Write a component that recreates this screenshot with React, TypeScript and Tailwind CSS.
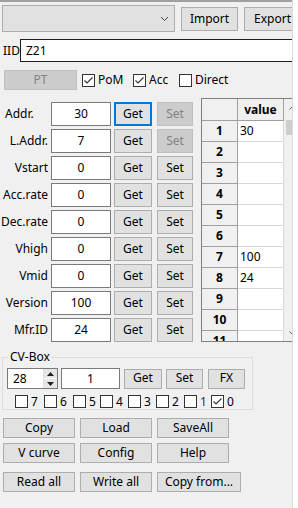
import React from 'react';

const ui = "font-['Noto_Sans','Liberation_Sans',sans-serif] text-[12px] leading-none";

const Btn = ({ label, w, h = 'h-[24px]', disabled = false, focused = false, extra = '' }: {
  label: string; w: string; h?: string; disabled?: boolean; focused?: boolean; extra?: string;
}) => {
  const look = disabled
    ? 'bg-[#cccccc] border border-[#bfbfbf] text-[#838383]'
    : focused
      ? 'bg-[#e1e1e1] border-2 border-[#0078d7] text-black'
      : 'bg-[#e1e1e1] border border-[#adadad] text-black';
  return (
    <div className={`${w} ${h} ${look} ${extra} shrink-0 flex items-center justify-center`}>
      <span className="-mt-[1px]">{label}</span>
    </div>
  );
};

const Check = ({ checked = false }: { checked?: boolean }) => (
  <div className="w-[13px] h-[13px] shrink-0 border border-[#333333] bg-white flex items-center justify-center">
    {checked && (
      <svg width="11" height="11" viewBox="0 0 11 11">
        <polyline points="1.5,5.5 4,8 9.5,2.5" fill="none" stroke="#333" strokeWidth="1.1" />
      </svg>
    )}
  </div>
);

const rows = [
  { label: 'Addr.', value: '30', left: true },
  { label: 'L.Addr.', value: '7' },
  { label: 'Vstart', value: '0' },
  { label: 'Acc.rate', value: '0' },
  { label: 'Dec.rate', value: '0' },
  { label: 'Vhigh', value: '0' },
  { label: 'Vmid', value: '0' },
  { label: 'Version', value: '100' },
  { label: 'Mfr.ID', value: '24' },
];

const gridValues: Record<number, string> = { 1: '30', 7: '100', 8: '24' };

const bits = [
  { n: '7', w: 'w-[29px]' },
  { n: '6', w: 'w-[29px]' },
  { n: '5', w: 'w-[27px]' },
  { n: '4', w: 'w-[28px]' },
  { n: '3', w: 'w-[28px]' },
  { n: '2', w: 'w-[28px]' },
  { n: '1', w: 'w-[27px]', purple: true },
  { n: '0', w: 'w-[20px]', checked: true },
];

export default function App() {
  return (
    <div className={`w-[298px] h-[508px] bg-white flex overflow-hidden ${ui}`}>
      <div className="w-[292px] h-full shrink-0 bg-[#f0f0f0] border-t-2 border-[#a0a0a0] overflow-hidden flex flex-col">
        {/* combo + import/export */}
        <div className="flex items-start mt-[3px] pl-[2px]">
          <div className="w-[173px] h-[27px] shrink-0 bg-[#e1e1e1] border border-[#adadad] flex items-center justify-end pr-[5px]">
            <svg width="9" height="6" viewBox="0 0 9 6">
              <polyline points="1,1 4.5,4.5 8,1" fill="none" stroke="#444" strokeWidth="1" />
            </svg>
          </div>
          <Btn label="Import" w="w-[57px]" extra="ml-[6px] mt-[2px]" />
          <Btn label="Export" w="w-[57px]" extra="ml-[6px] mt-[2px]" />
        </div>

        {/* IID */}
        <div className="flex items-center mt-[7px] pl-[3px]">
          <span className="w-[17px] shrink-0">IID</span>
          <div className="w-[290px] h-[23px] shrink-0 bg-white border border-[#1e1e1e] flex items-center pl-[5px]">
            Z21
          </div>
        </div>

        {/* PT + options */}
        <div className="flex items-center mt-[8px] pl-[4px]">
          <Btn label="PT" w="w-[73px]" h="h-[20px]" disabled />
          <div className="w-[51px] ml-[5px] flex items-center gap-[3px]">
            <Check checked /> <span>PoM</span>
          </div>
          <div className="w-[46px] flex items-center gap-[3px]">
            <Check checked /> <span>Acc</span>
          </div>
          <div className="flex items-center gap-[3px]">
            <Check /> <span>Direct</span>
          </div>
        </div>

        {/* parameters + grid */}
        <div className="flex items-start mt-[8px]">
          <div className="w-[193px] shrink-0 pt-[4px] flex flex-col gap-[3px]">
            {rows.map((r, i) => (
              <div key={r.label} className="flex items-center h-[24px]">
                <span className={`w-[48px] shrink-0 ${r.left ? 'text-left pl-[5px]' : 'text-right'}`}>{r.label}</span>
                <div className="w-[60px] h-[24px] ml-[3px] shrink-0 bg-white border border-[#7a7a7a] flex items-center justify-center">
                  {r.value}
                </div>
                <Btn label="Get" w="w-[38px]" extra="ml-[3px]" focused={i === 0} />
                <Btn label="Set" w="w-[36px]" extra="ml-[5px]" disabled={i < 2} />
              </div>
            ))}
          </div>

          <div className="ml-[8px] w-[101px] shrink-0 h-[244px] border border-[#808080] bg-white flex overflow-hidden">
            <div className="w-[82px] shrink-0 flex flex-col">
              <div className="flex h-[22px] shrink-0">
                <div className="w-[36px] bg-[#f0f0f0] border-r border-b border-[#a0a0a0]" />
                <div className="w-[46px] bg-[#f0f0f0] border-r border-b border-[#a0a0a0] flex items-center justify-center font-bold">
                  value
                </div>
              </div>
              {Array.from({ length: 11 }, (_, k) => k + 1).map((n) => (
                <div key={n} className="flex h-[21px] shrink-0">
                  <div className="w-[36px] bg-[#f0f0f0] border-r border-b border-[#a0a0a0] flex items-center justify-center font-bold">
                    {n}
                  </div>
                  <div className="w-[46px] bg-white border-r border-b border-[#d8d8d8] flex items-center pl-[2px]">
                    {gridValues[n] ?? ''}
                  </div>
                </div>
              ))}
            </div>
            <div className="w-[17px] shrink-0 bg-[#f0f0f0] flex flex-col items-center">
              <div className="h-[17px] flex items-center justify-center">
                <svg width="7" height="4" viewBox="0 0 7 4">
                  <polyline points="0.5,3.5 3.5,0.5 6.5,3.5" fill="none" stroke="#606060" strokeWidth="1" />
                </svg>
              </div>
              <div className="mt-[4px] w-[13px] h-[15px] bg-[#cdcdcd]" />
              <div className="mt-auto h-[17px] flex items-center justify-center">
                <svg width="7" height="4" viewBox="0 0 7 4">
                  <polyline points="0.5,0.5 3.5,3.5 6.5,0.5" fill="none" stroke="#606060" strokeWidth="1" />
                </svg>
              </div>
            </div>
          </div>
        </div>

        {/* CV-Box */}
        <fieldset className="mt-[8px] ml-[2px] w-[251px] border border-[#dcdcdc] pb-[1px]">
          <legend className="ml-[5px] px-[2px] leading-[14px]">CV-Box</legend>
          <div className="flex items-center mt-[4px] ml-[4px]">
            <div className="w-[51px] h-[21px] shrink-0 bg-white border border-[#7a7a7a] flex items-center">
              <span className="pl-[5px] flex-1">28</span>
              <div className="w-[14px] h-full flex flex-col border-l border-[#e0e0e0]">
                <div className="flex-1 bg-[#e6e6e6] border-b border-white flex items-center justify-center">
                  <svg width="7" height="4" viewBox="0 0 7 4"><polygon points="0,4 3.5,0 7,4" fill="#222" /></svg>
                </div>
                <div className="flex-1 bg-[#e6e6e6] flex items-center justify-center">
                  <svg width="7" height="4" viewBox="0 0 7 4"><polygon points="0,0 3.5,4 7,0" fill="#222" /></svg>
                </div>
              </div>
            </div>
            <div className="w-[59px] h-[21px] ml-[3px] shrink-0 bg-white border border-[#7a7a7a] flex items-center justify-center">
              1
            </div>
            <Btn label="Get" w="w-[38px]" h="h-[20px]" extra="ml-[4px]" />
            <Btn label="Set" w="w-[37px]" h="h-[20px]" extra="ml-[4px]" />
            <Btn label="FX" w="w-[37px]" h="h-[20px]" extra="ml-[5px]" />
          </div>
          <div className="flex items-center mt-[6px] ml-[12px]">
            {bits.map((b) => (
              <div key={b.n} className={`${b.w} shrink-0 flex items-center gap-[3px]`}>
                <Check checked={b.checked} />
                <span className={b.purple ? 'text-[#4c1a5c]' : ''}>{b.n}</span>
              </div>
            ))}
          </div>
        </fieldset>

        {/* bottom buttons */}
        <div className="flex flex-col mt-[8px] pl-[3px]">
          <div className="flex gap-[5px]">
            <Btn label="Copy" w="w-[72px]" h="h-[20px]" />
            <Btn label="Load" w="w-[72px]" h="h-[20px]" />
            <Btn label="SaveAll" w="w-[72px]" h="h-[20px]" />
          </div>
          <div className="flex gap-[5px] mt-[5px]">
            <Btn label="V curve" w="w-[72px]" h="h-[20px]" />
            <Btn label="Config" w="w-[72px]" h="h-[20px]" />
            <Btn label="Help" w="w-[72px]" h="h-[20px]" />
          </div>
          <div className="flex gap-[5px] mt-[9px]">
            <Btn label="Read all" w="w-[72px]" h="h-[20px]" />
            <Btn label="Write all" w="w-[72px]" h="h-[20px]" />
            <Btn label="Copy from..." w="w-[84px]" h="h-[20px]" />
          </div>
        </div>
      </div>
      <div className="flex-1 h-full border-l border-[#dadada] bg-white" />
    </div>
  );
}
